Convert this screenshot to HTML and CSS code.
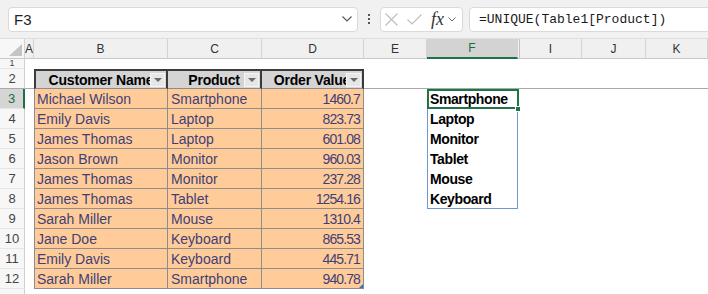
FILE: index.html
```html
<!DOCTYPE html>
<html>
<head>
  <title>UNIQUE spill</title>
  <link rel="stylesheet" href="styles.css">
</head>
<body>
<div class="app">
  <div class="formula-bar">
    <div class="name-box">
      <span>F3</span>
      <svg width="10" height="6" viewBox="0 0 10 6"><polyline points="0.5,0.5 5,5 9.5,0.5" fill="none" stroke="#555" stroke-width="1.1"/></svg>
    </div>
    <div class="grip"><i></i><i></i><i></i></div>
    <div class="fx-tools">
      <svg class="ico-x" width="13" height="13" viewBox="0 0 13 13"><path d="M0.5 0.5 L12.5 12.5 M12.5 0.5 L0.5 12.5" stroke="#bdbdbd" stroke-width="1.1" fill="none"/></svg>
      <svg class="ico-ok" width="15" height="11" viewBox="0 0 15 11"><polyline points="0.5,5.5 5,10 14.5,0.5" stroke="#bdbdbd" stroke-width="1.1" fill="none"/></svg>
      <span class="fx">fx</span>
      <svg width="8" height="5" viewBox="0 0 8 5"><polyline points="0.5,0.5 4,4 7.5,0.5" fill="none" stroke="#666" stroke-width="1"/></svg>
    </div>
    <div class="formula-input">=UNIQUE(Table1[Product])</div>
  </div>

  <div class="sheet">
    <!-- column letters -->
    <div class="row col-heads">
      <div class="cell rh corner"><svg width="13" height="12" viewBox="0 0 13 12"><polygon points="13,0 13,12 0,12" fill="#c4c4c4"/></svg></div>
      <div class="cell a">A</div>
      <div class="cell b">B</div>
      <div class="cell c">C</div>
      <div class="cell d">D</div>
      <div class="cell e">E</div>
      <div class="cell f active">F</div>
      <div class="cell gh"></div>
      <div class="cell i">I</div>
      <div class="cell j">J</div>
      <div class="cell k">K</div>
    </div>

    <div class="row r1">
      <div class="cell rh">1</div>
    </div>

    <div class="row frozen">
      <div class="cell rh">2</div>
      <div class="cell a"></div>
      <div class="cell b th first"><span>Customer Name</span><i class="dd"></i></div>
      <div class="cell c th"><span>Product</span><i class="dd"></i></div>
      <div class="cell d th"><span>Order Value</span><i class="dd"></i></div>
      <div class="cell e"></div>
      <div class="cell f"></div>
      <div class="cell gh"></div>
      <div class="cell i"></div>
      <div class="cell j"></div>
      <div class="cell k"></div>
    </div>

    <div class="row">
      <div class="cell rh active">3</div>
      <div class="cell a"></div>
      <div class="cell b in">Michael Wilson</div>
      <div class="cell c in">Smartphone</div>
      <div class="cell d in num">1460.7</div>
      <div class="cell e"></div>
      <div class="cell f spill sel">Smartphone</div>
    </div>
    <div class="row">
      <div class="cell rh">4</div>
      <div class="cell a"></div>
      <div class="cell b in">Emily Davis</div>
      <div class="cell c in">Laptop</div>
      <div class="cell d in num">823.73</div>
      <div class="cell e"></div>
      <div class="cell f spill">Laptop</div>
    </div>
    <div class="row">
      <div class="cell rh">5</div>
      <div class="cell a"></div>
      <div class="cell b in">James Thomas</div>
      <div class="cell c in">Laptop</div>
      <div class="cell d in num">601.08</div>
      <div class="cell e"></div>
      <div class="cell f spill">Monitor</div>
    </div>
    <div class="row">
      <div class="cell rh">6</div>
      <div class="cell a"></div>
      <div class="cell b in">Jason Brown</div>
      <div class="cell c in">Monitor</div>
      <div class="cell d in num">960.03</div>
      <div class="cell e"></div>
      <div class="cell f spill">Tablet</div>
    </div>
    <div class="row">
      <div class="cell rh">7</div>
      <div class="cell a"></div>
      <div class="cell b in">James Thomas</div>
      <div class="cell c in">Monitor</div>
      <div class="cell d in num">237.28</div>
      <div class="cell e"></div>
      <div class="cell f spill">Mouse</div>
    </div>
    <div class="row">
      <div class="cell rh">8</div>
      <div class="cell a"></div>
      <div class="cell b in">James Thomas</div>
      <div class="cell c in">Tablet</div>
      <div class="cell d in num">1254.16</div>
      <div class="cell e"></div>
      <div class="cell f spill spill-end">Keyboard</div>
    </div>
    <div class="row">
      <div class="cell rh">9</div>
      <div class="cell a"></div>
      <div class="cell b in">Sarah Miller</div>
      <div class="cell c in">Mouse</div>
      <div class="cell d in num">1310.4</div>
    </div>
    <div class="row">
      <div class="cell rh">10</div>
      <div class="cell a"></div>
      <div class="cell b in">Jane Doe</div>
      <div class="cell c in">Keyboard</div>
      <div class="cell d in num">865.53</div>
    </div>
    <div class="row">
      <div class="cell rh">11</div>
      <div class="cell a"></div>
      <div class="cell b in">Emily Davis</div>
      <div class="cell c in">Keyboard</div>
      <div class="cell d in num">445.71</div>
    </div>
    <div class="row">
      <div class="cell rh">12</div>
      <div class="cell a"></div>
      <div class="cell b in">Sarah Miller</div>
      <div class="cell c in">Smartphone</div>
      <div class="cell d in num last">940.78</div>
    </div>
    <div class="row">
      <div class="cell rh"></div>
    </div>
  </div>
</div>
</body>
</html>
```

FILE: styles.css
```css
body {
    margin: 0;
    background: #fff;
    font-family: 'Liberation Sans', Arial, sans-serif;
    font-size: 14px;
    color: #000;
}

.app {
    width: 708px;
    height: 294px;
    overflow: hidden;
}

/* formula bar */
.formula-bar {
    height: 38px;
    box-sizing: border-box;
    background: #f1f1f1;
    display: flex;
    align-items: center;
    padding: 0 0 0 8px;
    overflow: hidden;
}

.name-box {
    width: 350px;
    height: 25px;
    box-sizing: border-box;
    background: #fff;
    border: 1px solid #dadada;
    border-radius: 4px;
    display: flex;
    align-items: center;
    justify-content: space-between;
    padding: 0 5px 0 5px;
    font-size: 15px;
    color: #222;
    flex: none;
}

.grip {
    width: 22px;
    display: flex;
    flex-direction: column;
    align-items: center;
    gap: 2px;
    flex: none;
}

.grip i {
    width: 2px;
    height: 2px;
    background: #555;
}

.fx-tools {
    width: 83px;
    height: 25px;
    box-sizing: border-box;
    background: #fff;
    border: 1px solid #dadada;
    border-radius: 4px;
    display: flex;
    align-items: center;
    padding-left: 4px;
    flex: none;
}

.ico-x { margin-right: 9px; }
.ico-ok { margin-right: 9px; }

.fx {
    font-family: 'Liberation Serif', serif;
    font-style: italic;
    font-size: 18px;
    color: #333;
    margin-right: 4px;
    line-height: 1;
}

.formula-input {
    flex: 1;
    height: 25px;
    box-sizing: border-box;
    margin-left: 6px;
    margin-right: -10px;
    background: #fff;
    border: 1px solid #dadada;
    border-radius: 4px;
    display: flex;
    align-items: center;
    padding-left: 9px;
    font-family: 'Liberation Mono', monospace;
    font-size: 13px;
    color: #1a1a1a;
}

/* grid */
.row {
    display: flex;
    height: 20px;
}

.cell {
    box-sizing: border-box;
    flex: none;
    height: 100%;
    display: flex;
    align-items: center;
    overflow: hidden;
    white-space: nowrap;
    position: relative;
}

.rh { width: 25px; }
.a { width: 9px; }
.b { width: 134px; }
.c { width: 94px; }
.d { width: 102px; }
.e { width: 63px; }
.f { width: 91px; }
.gh { width: 2px; }
.i { width: 62px; }
.j { width: 64px; }
.k { flex: 1; }

.col-heads {
    height: 21px;
    background: #f0f0f0;
    border-top: 1px solid #dedede;
    box-sizing: border-box;
}

.col-heads .cell {
    justify-content: center;
    font-size: 12px;
    color: #333;
    border-right: 1px solid #d3d3d3;
    border-bottom: 1px solid #c8c8c8;
}

.col-heads .corner {
    justify-content: flex-end;
    align-items: flex-end;
    padding: 0 2px 2px 0;
}

.col-heads .gh {
    border-right: 1px solid #c4c4c4;
}

.col-heads .f.active {
    background: #d3d3d3;
    color: #1e6b3c;
    border-bottom: 2px solid #1e7145;
}

.rh {
    background: #f7f7f7;
    border-right: 1px solid #cfcfcf;
    border-bottom: 1px solid #e6e6e6;
    justify-content: center;
    font-size: 13px;
    color: #444;
}

.rh.active {
    background: #d5d5d5;
    color: #1e6b3c;
    border-right: 2px solid #1e7145;
}

.r1 {
    height: 10px;
}

.r1 .rh {
    font-size: 9px;
    line-height: 9px;
}

.frozen .cell {
    border-bottom: 1px solid #a9a9a9;
}

/* table header */
.th {
    background: #d4d4d4;
    border-top: 2px solid #3b3b3b;
    border-right: 2px solid #3b3b3b;
    justify-content: center;
    font-weight: bold;
    letter-spacing: -0.2px;
}

.frozen .th {
    border-bottom: 1px solid #8c8c8c;
}

.th.first {
    border-left: 2px solid #3b3b3b;
}

.dd {
    position: absolute;
    right: 1px;
    top: 2px;
    width: 15px;
    height: 14px;
    box-sizing: border-box;
    background: #e6e6e6;
    border: 1px solid #f6f6f6;
    display: flex;
    align-items: center;
    justify-content: center;
}

.dd::after {
    content: "";
    border-left: 4px solid transparent;
    border-right: 4px solid transparent;
    border-top: 4px solid #6b6b6b;
}

/* input cells */
.in {
    background: #ffcc99;
    color: #3f3f76;
    border-right: 1px solid #8d8d8d;
    border-bottom: 1px solid #8d8d8d;
    padding-left: 3px;
}

.b.in {
    border-left: 1px solid #8d8d8d;
    padding-left: 2px;
}

.num {
    justify-content: flex-end;
    padding-right: 3px;
    letter-spacing: -0.9px;
}

.num.last::after {
    content: "";
    position: absolute;
    right: 0;
    bottom: 0;
    border-left: 4px solid transparent;
    border-bottom: 4px solid #3b6cc6;
}

/* spilled range */
.spill {
    border-left: 1px solid #7196d8;
    border-right: 1px solid #7196d8;
    padding-left: 2px;
    font-weight: bold;
    letter-spacing: -0.4px;
}

.spill-end {
    border-bottom: 1px solid #7196d8;
}

.sel {
    overflow: visible;
    z-index: 2;
}

.sel::before {
    content: "";
    position: absolute;
    left: -1px;
    top: 0;
    right: -2px;
    bottom: 0;
    border: 2px solid #1f7346;
}

.sel::after {
    content: "";
    position: absolute;
    right: -4px;
    bottom: -3px;
    width: 6px;
    height: 6px;
    box-sizing: border-box;
    background: #1f7346;
    border: 1px solid #fff;
}
```
